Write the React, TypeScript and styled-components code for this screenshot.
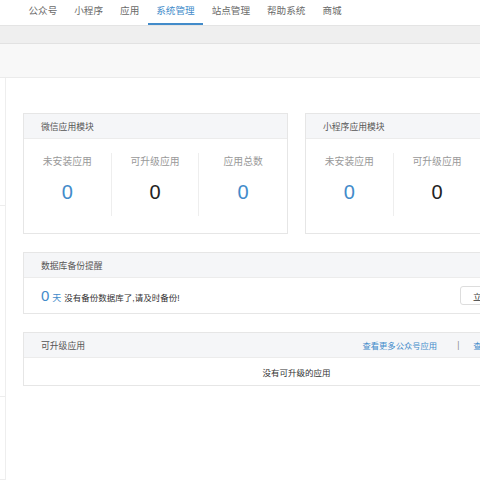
import styled, { createGlobalStyle } from "styled-components";

const GlobalStyle = createGlobalStyle`
  html, body {
    margin: 0;
    padding: 0;
    overflow: hidden;
    background: #fff;
  }
  body {
    font-family: "Liberation Sans", "Noto Sans CJK SC", sans-serif;
    color: #333;
  }
`;

const navItems = ["公众号", "小程序", "应用", "系统管理", "站点管理", "帮助系统", "商城"];
const activeNav = "系统管理";

const sidebarGroups = [127, 190, 82, 60];

const wechatStats = [
  { label: "未安装应用", value: 0, blue: true },
  { label: "可升级应用", value: 0, blue: false },
  { label: "应用总数", value: 0, blue: true },
];

const wxappStats = [
  { label: "未安装应用", value: 0, blue: true },
  { label: "可升级应用", value: 0, blue: false },
  { label: "应用总数", value: 0, blue: true },
];

const StatsCard = ({ title, stats }: { title: string; stats: typeof wechatStats }) => (
  <Card>
    <CardHeader>
      <CardTitle>{title}</CardTitle>
    </CardHeader>
    <StatsBody>
      {stats.map((s) => (
        <StatCol key={s.label}>
          <StatLabel>{s.label}</StatLabel>
          <StatValue blue={s.blue}>{s.value}</StatValue>
        </StatCol>
      ))}
    </StatsBody>
  </Card>
);

export default function App() {
  return (
    <Page>
      <GlobalStyle />
      <TopNav>
        {navItems.map((item) => (
          <NavItem key={item} active={item === activeNav}>
            {item}
          </NavItem>
        ))}
      </TopNav>
      <SubBar />
      <CrumbBar />
      <Layout>
        <Sidebar>
          {sidebarGroups.map((h, i) => (
            <SidebarGroup key={i} height={h} />
          ))}
        </Sidebar>
        <Main>
          <CardRow>
            <StatsCard title="微信应用模块" stats={wechatStats} />
            <StatsCard title="小程序应用模块" stats={wxappStats} />
          </CardRow>

          <Card>
            <CardHeader>
              <CardTitle>数据库备份提醒</CardTitle>
            </CardHeader>
            <BackupBody>
              <BackupText>
                <Days>0</Days>
                <DayUnit>天</DayUnit>
                没有备份数据库了,请及时备份!
              </BackupText>
              <Button>立即备份</Button>
            </BackupBody>
          </Card>

          <Card>
            <CardHeader>
              <CardTitle>可升级应用</CardTitle>
              <HeaderLinks>
                <Link>查看更多公众号应用</Link>
                <Divider>|</Divider>
                <Link>查看更多小程序应用</Link>
              </HeaderLinks>
            </CardHeader>
            <EmptyBody>没有可升级的应用</EmptyBody>
          </Card>
        </Main>
      </Layout>
    </Page>
  );
}

const Page = styled.div`
  width: 620px;
  min-height: 480px;
`;

const TopNav = styled.nav`
  display: flex;
  height: 25px;
  padding-left: 20px;
  border-bottom: 1px solid #e4e4e4;
  background: #fff;
`;

const NavItem = styled.div<{ active?: boolean }>`
  padding: 0 8.5px;
  font-size: 9.6px;
  line-height: 21px;
  color: ${({ active }) => (active ? "#428bca" : "#6a6a6a")};
  border-bottom: 2px solid ${({ active }) => (active ? "#428bca" : "transparent")};
  white-space: nowrap;
`;

const SubBar = styled.div`
  height: 17px;
  background: #efefef;
  border-bottom: 1px solid #e2e2e2;
`;

const CrumbBar = styled.div`
  height: 33px;
  background: #f8f8f8;
  border-bottom: 1px solid #ebebeb;
`;

const Layout = styled.div`
  display: flex;
`;

const Sidebar = styled.aside`
  width: 5px;
  border-right: 1px solid #eeeeee;
  min-height: 402px;
`;

const SidebarGroup = styled.div<{ height: number }>`
  height: ${({ height }) => height}px;
  border-bottom: 1px solid #ededed;
`;

const Main = styled.main`
  width: 547px;
  padding: 35px 17px;
  display: flex;
  flex-direction: column;
  align-items: stretch;
  gap: 18px;
`;

const CardRow = styled.div`
  display: grid;
  grid-template-columns: 1fr 1fr;
  gap: 17px;
`;

const Card = styled.section`
  border: 1px solid #e6e6e6;
  background: #fff;
`;

const CardHeader = styled.header`
  height: 24px;
  display: flex;
  align-items: center;
  justify-content: space-between;
  padding: 0 21px 0 17px;
  background: #f5f6f8;
  border-bottom: 1px solid #ececec;
`;

const CardTitle = styled.h3`
  margin: 0;
  font-size: 8.8px;
  font-weight: normal;
  color: #555;
`;

const StatsBody = styled.div`
  display: grid;
  grid-template-columns: repeat(3, 1fr);
  padding: 14px 0 17px;
`;

const StatCol = styled.div`
  height: 63px;
  display: flex;
  flex-direction: column;
  align-items: center;
  border-right: 1px solid #eeeeee;

  &:last-child {
    border-right: none;
  }
`;

const StatLabel = styled.div`
  font-size: 9.8px;
  line-height: 16px;
  padding-top: 1px;
  color: #999;
`;

const StatValue = styled.div<{ blue?: boolean }>`
  margin-top: 10px;
  font-size: 20px;
  line-height: 24px;
  color: ${({ blue }) => (blue ? "#428bca" : "#222")};
`;

const BackupBody = styled.div`
  height: 35px;
  display: flex;
  align-items: center;
  justify-content: space-between;
  padding: 0 49px 0 17px;
`;

const BackupText = styled.div`
  font-size: 8.5px;
  color: #333;
  display: flex;
  align-items: baseline;
`;

const Days = styled.span`
  font-size: 15px;
  color: #428bca;
  margin-right: 3px;
`;

const DayUnit = styled.span`
  font-size: 9px;
  color: #428bca;
  margin-right: 3px;
`;

const Button = styled.button`
  height: 19px;
  padding: 0 12px;
  border: 1px solid #dddddd;
  border-radius: 3px;
  background: #fff;
  font-family: inherit;
  font-size: 8.5px;
  color: #333;
`;

const HeaderLinks = styled.div`
  display: flex;
  align-items: center;
  font-size: 8.3px;
`;

const Link = styled.a`
  color: #428bca;
  text-decoration: none;
`;

const Divider = styled.span`
  color: #888;
  margin: 0 14px 0 20px;
`;

const EmptyBody = styled.div`
  height: 27px;
  display: flex;
  align-items: center;
  justify-content: center;
  font-size: 8.5px;
  color: #333;
`;
